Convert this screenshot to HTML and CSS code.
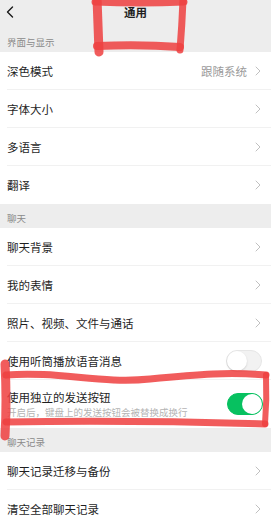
FILE: index.html
```html
<!DOCTYPE html>
<html lang="zh-CN">
<head>
<meta charset="utf-8">
<title>通用</title>
<link rel="stylesheet" href="styles.css">
</head>
<body>
<div class="page">
  <header class="navbar">
    <svg class="back" width="8" height="12" viewBox="0 0 8 12"><path d="M6.5 1 L1.5 6 L6.5 11" fill="none" stroke="#1a1a1a" stroke-width="1.4" stroke-linecap="round" stroke-linejoin="round"/></svg>
    <div class="title">通用</div>
    <span></span>
  </header>

  <div class="section-label">界面与显示</div>
  <div class="group">
    <div class="row"><span class="label">深色模式</span><span class="value">跟随系统</span><svg class="chev" width="6" height="10" viewBox="0 0 6 10"><path d="M1 1 L5 5 L1 9" fill="none" stroke="#c0c0c0" stroke-width="1" stroke-linecap="round" stroke-linejoin="round"/></svg></div>
    <div class="row"><span class="label">字体大小</span><svg class="chev" width="6" height="10" viewBox="0 0 6 10"><path d="M1 1 L5 5 L1 9" fill="none" stroke="#c0c0c0" stroke-width="1" stroke-linecap="round" stroke-linejoin="round"/></svg></div>
    <div class="row"><span class="label">多语言</span><svg class="chev" width="6" height="10" viewBox="0 0 6 10"><path d="M1 1 L5 5 L1 9" fill="none" stroke="#c0c0c0" stroke-width="1" stroke-linecap="round" stroke-linejoin="round"/></svg></div>
    <div class="row last"><span class="label">翻译</span><svg class="chev" width="6" height="10" viewBox="0 0 6 10"><path d="M1 1 L5 5 L1 9" fill="none" stroke="#c0c0c0" stroke-width="1" stroke-linecap="round" stroke-linejoin="round"/></svg></div>
  </div>

  <div class="section-label">聊天</div>
  <div class="group">
    <div class="row"><span class="label">聊天背景</span><svg class="chev" width="6" height="10" viewBox="0 0 6 10"><path d="M1 1 L5 5 L1 9" fill="none" stroke="#c0c0c0" stroke-width="1" stroke-linecap="round" stroke-linejoin="round"/></svg></div>
    <div class="row"><span class="label">我的表情</span><svg class="chev" width="6" height="10" viewBox="0 0 6 10"><path d="M1 1 L5 5 L1 9" fill="none" stroke="#c0c0c0" stroke-width="1" stroke-linecap="round" stroke-linejoin="round"/></svg></div>
    <div class="row"><span class="label">照片、视频、文件与通话</span><svg class="chev" width="6" height="10" viewBox="0 0 6 10"><path d="M1 1 L5 5 L1 9" fill="none" stroke="#c0c0c0" stroke-width="1" stroke-linecap="round" stroke-linejoin="round"/></svg></div>
    <div class="row"><span class="label">使用听筒播放语音消息</span><span class="switch"><span class="knob"></span></span></div>
    <div class="row tall last">
      <div class="label two">
        <span class="main">使用独立的发送按钮</span>
        <span class="sub">开启后，键盘上的发送按钮会被替换成换行</span>
      </div>
      <span class="switch on"><span class="knob"></span></span>
    </div>
  </div>

  <div class="section-label">聊天记录</div>
  <div class="group">
    <div class="row"><span class="label">聊天记录迁移与备份</span><svg class="chev" width="6" height="10" viewBox="0 0 6 10"><path d="M1 1 L5 5 L1 9" fill="none" stroke="#c0c0c0" stroke-width="1" stroke-linecap="round" stroke-linejoin="round"/></svg></div>
    <div class="row last"><span class="label">清空全部聊天记录</span><svg class="chev" width="6" height="10" viewBox="0 0 6 10"><path d="M1 1 L5 5 L1 9" fill="none" stroke="#c0c0c0" stroke-width="1" stroke-linecap="round" stroke-linejoin="round"/></svg></div>
  </div>

  <svg class="marks" width="271" height="525" viewBox="0 0 271 525">
    <defs><filter id="soft" x="-10%" y="-10%" width="120%" height="120%"><feGaussianBlur stdDeviation="0.7"/></filter></defs>
    <g fill="none" stroke="#ef4040" stroke-opacity="0.85" stroke-linecap="round" stroke-linejoin="round" filter="url(#soft)">
      <path d="M97 -2 L99 52" stroke-width="9"/>
      <path d="M95 2 Q140 4 184 2" stroke-width="7"/>
      <path d="M183 0 Q182 25 180 50" stroke-width="7"/>
      <path d="M97 46 Q140 44 180 47" stroke-width="8"/>
      <path d="M5 364 Q7 400 5 436" stroke-width="9"/>
      <path d="M6 375 C60 371 100 384 150 379 S230 372 266 375" stroke-width="7"/>
      <path d="M266 375 Q267 400 265 424" stroke-width="6"/>
      <path d="M6 422 Q130 420 265 424" stroke-width="7"/>
    </g>
  </svg>
</div>
</body>
</html>
```

FILE: styles.css
```css
* { box-sizing: border-box; }
html, body { margin: 0; padding: 0; }
body {
  background: #ededed;
  font-family: "Noto Sans CJK SC", "Noto Sans", sans-serif;
  color: #1f1f1f;
}
.page {
  position: relative;
  width: 271px;
  height: 525px;
  overflow: hidden;
}
.navbar {
  height: 28px;
  display: grid;
  grid-template-columns: 30px 1fr 30px;
  align-items: center;
  padding-bottom: 4px;
}
.back { margin-left: 6px; }
.title {
  text-align: center;
  font-size: 11.5px;
  font-weight: 700;
  line-height: 14px;
}
.section-label {
  height: 24px;
  display: flex;
  align-items: flex-end;
  padding: 0 7px 4px;
  font-size: 9.5px;
  line-height: 12px;
  color: #8a8a8a;
}
.group { background: #fff; }
.row {
  height: 38px;
  margin-left: 7px;
  padding-right: 10px;
  display: flex;
  align-items: center;
  border-bottom: 1px solid #f1f1f1;
  font-size: 11.5px;
  line-height: 14px;
}
.row.last { border-bottom: none; }
.row.tall { height: 48px; padding-right: 9px; }
.label { flex: 1; }
.label.two { display: flex; flex-direction: column; gap: 2px; }
.sub { font-size: 9.5px; line-height: 12px; color: #b4b4b4; }
.value { color: #9a9a9a; margin-right: 8px; }
.chev { display: block; }
.switch {
  position: relative;
  width: 36px;
  height: 22px;
  border-radius: 11px;
  background: #f2f2f2;
  border: 1px solid #e6e6e6;
  margin-right: -1px;
}
.switch .knob {
  position: absolute;
  top: 0;
  left: 0;
  width: 20px;
  height: 20px;
  border-radius: 50%;
  background: #fff;
  box-shadow: 0 1px 2px rgba(0,0,0,0.15);
}
.switch.on { background: #07c160; border-color: #07c160; }
.switch.on .knob { left: 14px; box-shadow: none; }
.marks {
  position: absolute;
  left: 0;
  top: 0;
  pointer-events: none;
}
```
